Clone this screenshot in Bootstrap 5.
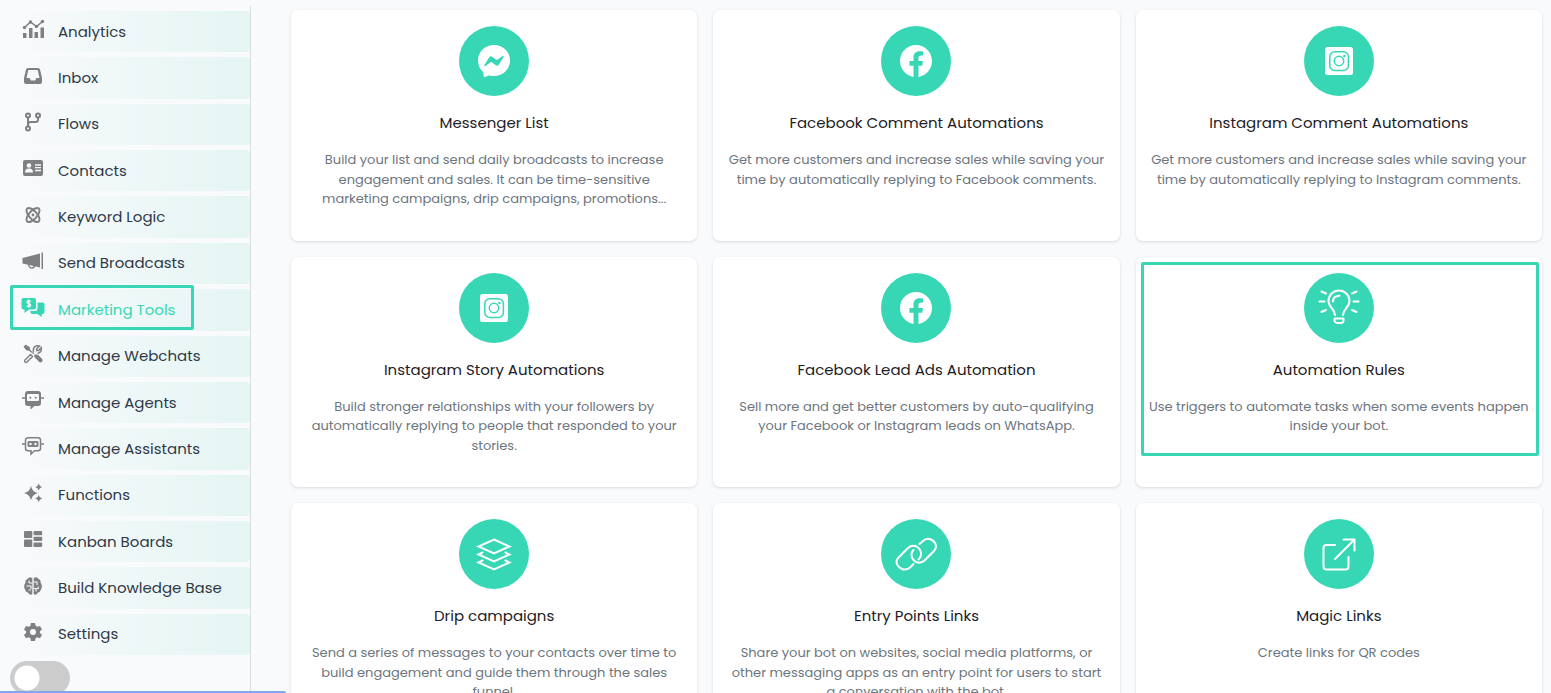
<!DOCTYPE html>
<html lang="en">
<head>
<meta charset="utf-8">
<meta name="viewport" content="width=device-width, initial-scale=1">
<title>Marketing Tools</title>
<link href="https://cdn.jsdelivr.net/npm/bootstrap@5.3.0/dist/css/bootstrap.min.css" rel="stylesheet">
<script src="https://cdn.jsdelivr.net/npm/bootstrap@5.3.0/dist/js/bootstrap.bundle.min.js" defer></script>
<style>
  :root { --accent: #37d7b6; --page: #f9fafc; }
  body { font-family: Poppins, Inter, "Open Sans", sans-serif; background: var(--page); }
  .app-side { width: 251px; height: 100vh; min-height: 600px; padding: 11px 0 0 13px; }
  .side-rule { position: absolute; top: 6px; bottom: 0; right: 0; width: 1px; background: #dbdcde; }
  .side-menu { gap: 5px; padding-right: 1px; min-height: 0; }
  .side-link { flex: 1 1 0; min-height: 0; color: #2f3947; font-size: 15px; line-height: 20px; text-decoration: none;
    border-radius: 4px; background: linear-gradient(90deg, #f9fafc, #e4f5f3); padding-left: 8px; }
  .side-link svg { width: 24px; height: 24px; margin-right: 13px; margin-bottom: 4px; fill: #7f8082; stroke: #7f8082; stroke-width: 0; }
  .side-link .ln { fill: none; stroke-width: 2; }
  .side-link .ln.thin { stroke-width: 1.5; }
  .side-link .cut { fill: none; stroke: #f7fafb; }
  .side-link .hole { fill: #f7fafb; stroke: none; }
  .side-link.current { color: var(--accent); }
  .side-link.current svg { fill: var(--accent); stroke: var(--accent); }
  .side-foot { height: 38px; padding-top: 6px; margin-left: -3px; }
  .big-switch { appearance: none; display: block; width: 60px; height: 34px; margin: 0; border-radius: 17px; cursor: pointer;
    background: radial-gradient(circle at 17px 17px, #fff 12px, transparent 13px) #ccc; }
  .big-switch:checked { background: radial-gradient(circle at 43px 17px, #fff 12px, transparent 13px) var(--accent); }
  .frame { position: absolute; border: 3px solid var(--accent); border-radius: 2px; pointer-events: none; }
  .side-link .frame { left: -3px; top: -4px; bottom: 1px; width: 184px; }
  .tool-card .frame { left: 5px; right: 3px; top: 5px; height: 194px; }
  .app-main { height: 100vh; padding: 10px 9px 0 40px; scrollbar-width: none; }
  .app-main::-webkit-scrollbar { display: none; }
  .tool-card { padding: 16px 13px 32px; border: 0; border-radius: 7px; text-decoration: none; box-shadow: 0 1px 3px rgba(40, 50, 70, .16); }
  .tool-icon { width: 70px; height: 70px; background: var(--accent); }
  .tool-icon svg { width: 44px; height: 44px; fill: none; stroke: #fff; stroke-width: 2; stroke-linecap: round; stroke-linejoin: round; }
  .tool-icon .solid { fill: #fff; stroke: none; }
  .tool-name { font-size: 15px; line-height: 20px; font-weight: 400; color: #1d2024; margin: 17px 0; }
  .tool-text { font-size: 13px; line-height: 1.5; color: #6c757d; }
  .load-line { width: 286px; height: 2px; background: #7fa8ee; border-top-right-radius: 2px; }
</style>
</head>
<body class="overflow-hidden">
<svg class="d-none" aria-hidden="true">
  <symbol id="t-fb" viewBox="-6 -6 44 44"><path transform="scale(2)" d="M16 8.049c0-4.446-3.582-8.05-8-8.05C3.58 0-.002 3.603-.002 8.05c0 4.017 2.926 7.347 6.75 7.951v-5.625h-2.03V8.05H6.75V6.275c0-2.017 1.195-3.131 3.022-3.131.876 0 1.791.157 1.791.157v1.98h-1.009c-.993 0-1.303.621-1.303 1.258v1.51h2.218l-.354 2.326H9.25V16c3.824-.604 6.75-3.934 6.75-7.951z" fill="#fff" stroke="none"/></symbol>
  <symbol id="t-ig" viewBox="0 0 44 44"><rect x="8" y="8" width="28" height="28" rx="2.5" fill="#fff" stroke="none"/><g stroke="#37d7b6" stroke-width="1.5"><rect x="12.8" y="12.8" width="18.6" height="18.6" rx="5"/><circle cx="22" cy="22" r="4.7"/></g><circle cx="27.4" cy="17" r="1.2" fill="#37d7b6" stroke="none"/></symbol>
</svg>

<div class="d-flex">
  <aside class="app-side d-flex flex-column flex-shrink-0 position-relative">
    <nav class="side-menu d-flex flex-column flex-fill" aria-label="Main">
      <a href="#" class="side-link d-flex align-items-center"><svg viewBox="0 2 24 24"><path d="M2 17h3.500v5H2zM8 12h3.500v10H8zM13.500 16H17v6h-3.500zM19.500 11.500H23V22h-3.500z"/><path class="ln thin" d="M3.500 11.500 9.500 6l6 4.500 6-5"/><circle cx="3.500" cy="11.500" r="1.700"/><circle cx="9.500" cy="6" r="1.700"/><circle cx="15.500" cy="10.500" r="1.700"/><circle cx="21.500" cy="5.500" r="1.700"/></svg>Analytics</a>
      <a href="#" class="side-link d-flex align-items-center"><svg viewBox="0 0 24 24"><path fill-rule="evenodd" d="M7 4h10q1.500 0 2 1.500L21 14v4q0 2-2 2H5q-2 0-2-2v-4L5 5.500Q5.500 4 7 4zm.3 2L5.500 14h3l1.500 2.500h4l1.500-2.500h3L16.700 6z"/></svg>Inbox</a>
      <a href="#" class="side-link d-flex align-items-center"><svg viewBox="0 0 24 24"><g class="ln"><circle cx="7" cy="5.500" r="2"/><circle cx="7" cy="18.500" r="2"/><circle cx="17" cy="5.500" r="2"/><path d="M7 7.500v9M17 7.500v2q0 2.500-2.500 2.500h-5Q7 12 7 14.500"/></g></svg>Flows</a>
      <a href="#" class="side-link d-flex align-items-center"><svg viewBox="0 1 24 24"><rect x="2" y="4" width="20" height="16" rx="2"/><circle class="hole" cx="8" cy="9.500" r="2.300"/><path class="hole" d="M4 16.500q0-4 4-4t4 4z"/><path class="cut" stroke-width="1.300" d="M14 9h6M14 11.700h6M14 14.500h6"/></svg>Contacts</a>
      <a href="#" class="side-link d-flex align-items-center"><svg viewBox="0 0 24 24"><g class="ln"><ellipse cx="12" cy="12" rx="4" ry="8.700" transform="rotate(42 12 12)"/><ellipse cx="12" cy="12" rx="4" ry="8.700" transform="rotate(-42 12 12)"/></g><circle cx="12" cy="12" r="1.400"/></svg>Keyword Logic</a>
      <a href="#" class="side-link d-flex align-items-center"><svg viewBox="0 0 24 24"><path d="M1.500 9 19 4.500v14L1.500 14.500zM20.500 3.500H22v16.500h-1.500z"/><path class="ln thin" d="M7.500 15.500q.5 3.500 3.500 3.500 2 0 2.500-2"/></svg>Send Broadcasts</a>
      <a href="#" class="side-link current d-flex align-items-center position-relative" aria-current="page"><svg viewBox="0 0 24 24"><path d="M2.500 2h10.500q2 0 2 2v7.500q0 2-2 2H8L3.500 17v-3.500h-1q-2 0-2-2V4q0-2 2-2z"/><path d="M16.500 6.500h5q2 0 2 2V16q0 2-2 2h-.7v3l-4.500-3h-4.800q-2 0-2-2v-1H14q2.500 0 2.500-2.500z"/><path class="cut" stroke-width="1.300" d="M9.800 5.500Q7.500 4.300 6.300 5.500q-1 1.300 1.400 2.100 2.700.9 1.600 2.400-1.300 1-3.500-.1M7.800 3.500v8.300"/></svg>Marketing Tools<span class="frame"></span></a>
      <a href="#" class="side-link d-flex align-items-center"><svg viewBox="0 0 24 24"><path class="ln thin" d="M4 18 9.500 12.500l2 2-5.500 5.500q-1 .8-2 0-.8-1 0-2zM12.500 10.500Q11.500 5.500 15 4q1.700-.7 3.500 0l-2.800 2.800v1.700h1.800l2.800-2.800q.7 4.800-3.800 5.800"/><path d="M2.500 4.800 4.800 2.500 9 5.500v2l5 5.200q2-.8 3.500.5l3.500 3.500q1.300 1.500 0 3t-3 0l-4.200-4.200q-1-1.300-.3-2.800L7.500 8.500h-2z"/></svg>Manage Webchats</a>
      <a href="#" class="side-link d-flex align-items-center"><svg viewBox="0 1 24 24"><path fill-rule="evenodd" d="M7 3h10q3 0 3 3v9q0 3-3 3h-3.500L9.500 21.500V18H7q-3 0-3-3V6q0-3 3-3zm0 3q-1 0-1 1v5q0 1 1 1h10q1 0 1-1V7q0-1-1-1z"/><circle cx="9.300" cy="9.700" r="1"/><circle cx="14.700" cy="9.700" r="1"/><path class="ln thin" d="M1 10h3M20 10h3"/></svg>Manage Agents</a>
      <a href="#" class="side-link d-flex align-items-center"><svg viewBox="0 1 24 24"><path class="ln thin" d="M7 3.800h10q2.500 0 2.500 2.500v8q0 2.500-2.500 2.500h-3.500L10 20v-3.200H7q-2.500 0-2.500-2.500v-8Q4.500 3.800 7 3.800zM1 10h3M20 10h3"/><rect x="6.500" y="7" width="11" height="6" rx="1.500"/><circle class="hole" cx="9.500" cy="10" r="1.200"/><circle class="hole" cx="14.500" cy="10" r="1.200"/></svg>Manage Assistants</a>
      <a href="#" class="side-link d-flex align-items-center"><svg viewBox="0 0 24 24"><path d="M10 5q1.300 6 7 7-5.700 1.300-7 7-1.300-5.700-7-7 5.700-1 7-7zM17.700 2.500q.6 3 3.500 3.500-2.900.6-3.500 3.500-.6-2.900-3.500-3.500 2.900-.5 3.500-3.500zM17.700 14q.6 3 3.500 3.500-2.900.6-3.500 3.500-.6-2.900-3.500-3.500 2.900-.5 3.500-3.500z"/></svg>Functions</a>
      <a href="#" class="side-link d-flex align-items-center"><svg viewBox="0 1 24 24"><rect x="3" y="4" width="8.300" height="7" rx="1"/><rect x="3" y="12.500" width="8.300" height="7.500" rx="1"/><rect x="12.500" y="4" width="8.700" height="4.300" rx="1"/><rect x="12.500" y="9.700" width="8.700" height="4.300" rx="1"/><rect x="12.500" y="15.500" width="8.700" height="4.500" rx="1"/></svg>Kanban Boards</a>
      <a href="#" class="side-link d-flex align-items-center"><svg viewBox="0 0 24 24"><path d="M11.300 4Q8 2 6.500 5 4 5.500 4.500 8.500q-2.500 3.500-.5 7Q4.500 18 7 18.500q2 3.500 4.300 1.500zM12.700 4Q16 2 17.500 5q2.500.5 2 3.500 2.500 3.500.5 7-.5 2.500-3 3-2 3.500-4.300 1.500z"/><path class="cut" stroke-width="1.100" d="M11.300 9H8M8 6.500V9M12.700 8H16v3M5.500 12h4.500v3M7.500 16H10M12.700 14.500h4.500v-2M15 14.500v3"/></svg>Build Knowledge Base</a>
      <a href="#" class="side-link d-flex align-items-center"><svg viewBox="0 0 24 24"><path fill-rule="evenodd" d="M10 3h4l.6 2.800 1.700 1 2.700-.9 2 3.500-2.100 1.800v1.700L21 14.700l-2 3.500-2.700-.9-1.700 1L14 21h-4l-.6-2.700-1.700-1-2.700.9-2-3.500 2.100-1.800v-1.700L3 9.400l2-3.500 2.700.9 1.700-1zM12 9a3 3 0 1 0 0 6 3 3 0 0 0 0-6z"/></svg>Settings</a>
    </nav>
    <div class="side-foot"><input type="checkbox" role="switch" class="big-switch" aria-label="Dark mode"></div>
    <span class="side-rule"></span>
  </aside>

  <main class="app-main flex-fill overflow-auto">
    <div class="row row-cols-3 g-3 text-center">
      <div class="col"><a href="#" class="tool-card card h-100 align-items-center">
        <span class="tool-icon rounded-circle d-flex align-items-center justify-content-center"><svg viewBox="-6 -6 44 44"><path class="solid" transform="scale(2)" d="M0 7.760C0 3.301 3.493 0 8 0s8 3.301 8 7.760-3.493 7.760-8 7.760c-.81 0-1.586-.107-2.316-.307a.639.639 0 0 0-.427.03l-1.588.702a.64.64 0 0 1-.898-.566l-.044-1.423a.639.639 0 0 0-.215-.456C.956 12.108 0 10.092 0 7.760zm5.546-1.459-2.350 3.728c-.225.358.214.761.551.506l2.525-1.916a.48.48 0 0 1 .578-.002l1.869 1.402a1.200 1.200 0 0 0 1.735-.32l2.350-3.728c.226-.358-.214-.761-.551-.506L9.728 7.381a.48.48 0 0 1-.578.002L7.281 5.980a1.200 1.200 0 0 0-1.735.32z"/></svg></span>
        <h2 class="tool-name">Messenger List</h2>
        <p class="tool-text mb-0">Build your list and send daily broadcasts to increase engagement and sales. It can be time-sensitive marketing campaigns, drip campaigns, promotions...</p></a></div>
      <div class="col"><a href="#" class="tool-card card h-100 align-items-center">
        <span class="tool-icon rounded-circle d-flex align-items-center justify-content-center"><svg><use href="#t-fb"/></svg></span>
        <h2 class="tool-name">Facebook Comment Automations</h2>
        <p class="tool-text mb-0">Get more customers and increase sales while saving your time by automatically replying to Facebook comments.</p></a></div>
      <div class="col"><a href="#" class="tool-card card h-100 align-items-center">
        <span class="tool-icon rounded-circle d-flex align-items-center justify-content-center"><svg><use href="#t-ig"/></svg></span>
        <h2 class="tool-name">Instagram Comment Automations</h2>
        <p class="tool-text mb-0">Get more customers and increase sales while saving your time by automatically replying to Instagram comments.</p></a></div>
      <div class="col"><a href="#" class="tool-card card h-100 align-items-center">
        <span class="tool-icon rounded-circle d-flex align-items-center justify-content-center"><svg><use href="#t-ig"/></svg></span>
        <h2 class="tool-name">Instagram Story Automations</h2>
        <p class="tool-text mb-0">Build stronger relationships with your followers by automatically replying to people that responded to your stories.</p></a></div>
      <div class="col"><a href="#" class="tool-card card h-100 align-items-center">
        <span class="tool-icon rounded-circle d-flex align-items-center justify-content-center"><svg><use href="#t-fb"/></svg></span>
        <h2 class="tool-name">Facebook Lead Ads Automation</h2>
        <p class="tool-text mb-0">Sell more and get better customers by auto-qualifying your Facebook or Instagram leads on WhatsApp.</p></a></div>
      <div class="col"><a href="#" class="tool-card card h-100 align-items-center position-relative">
        <span class="tool-icon rounded-circle d-flex align-items-center justify-content-center"><svg viewBox="0 0 44 44"><path d="M18 29q0-3-3-6.500-3.500-4-3.500-7.500a10.500 10.500 0 0 1 21 0q0 3.500-3.500 7.500-3 3.500-3 6.500M16 15.500q0-5.500 6.500-5.800M17.500 32.500h9v2.500q-.5 2-2.500 2h-4q-2-.3-2.500-2zM2.500 15.500h5M36.500 15.500h5M4.500 5.500l4.500 2M39.500 5.500l-4.500 2M4.500 26l4.500-2M39.500 26l-4.500-2"/></svg></span>
        <h2 class="tool-name">Automation Rules</h2>
        <p class="tool-text mb-0">Use triggers to automate tasks when some events happen inside your bot.</p>
        <span class="frame"></span></a></div>
      <div class="col"><a href="#" class="tool-card card h-100 align-items-center">
        <span class="tool-icon rounded-circle d-flex align-items-center justify-content-center"><svg viewBox="0 0 44 44"><path stroke-linejoin="miter" d="M22 7.500 37.500 14.500 22 21.500 6.500 14.500zM10.500 20.500 6.500 22.500 22 29.500 37.500 22.500 33.500 20.500M10.500 28.500 6.500 30.500 22 37.500 37.500 30.500 33.500 28.500"/></svg></span>
        <h2 class="tool-name">Drip campaigns</h2>
        <p class="tool-text mb-0">Send a series of messages to your contacts over time to build engagement and guide them through the sales funnel.</p></a></div>
      <div class="col"><a href="#" class="tool-card card h-100 align-items-center">
        <span class="tool-icon rounded-circle d-flex align-items-center justify-content-center"><svg viewBox="0 0 44 44"><path d="M19.500 32 16 35.500Q12.500 38.500 8 37 2.500 34.500 2.500 29.500 2.800 27 5 25L14 16Q18 12.500 22.500 14.500 27.500 17.500 27 23 26.500 25.500 24.500 27.500M25.500 12 29 9Q32.500 5.500 37 7.500 42 10 42 15 41.500 17.500 39.500 19.500L30.500 28.500Q26.500 32 22 30 17 27 17.500 21.500 18 19.500 19.500 18"/></svg></span>
        <h2 class="tool-name">Entry Points Links</h2>
        <p class="tool-text mb-0">Share your bot on websites, social media platforms, or other messaging apps as an entry point for users to start a conversation with the bot.</p></a></div>
      <div class="col"><a href="#" class="tool-card card h-100 align-items-center">
        <span class="tool-icon rounded-circle d-flex align-items-center justify-content-center"><svg viewBox="0 0 44 44"><path d="M18 13H9.500Q6.500 13 6.500 16V34.500Q6.500 37.500 9.500 37.500H28.500Q31.500 37.500 31.500 34.500V25M18 27 37.500 7.500M26.500 7.500h11v11"/></svg></span>
        <h2 class="tool-name">Magic Links</h2>
        <p class="tool-text mb-0">Create links for QR codes</p></a></div>
    </div>
  </main>
</div>
<div class="load-line position-fixed bottom-0 start-0"></div>
</body>
</html>
